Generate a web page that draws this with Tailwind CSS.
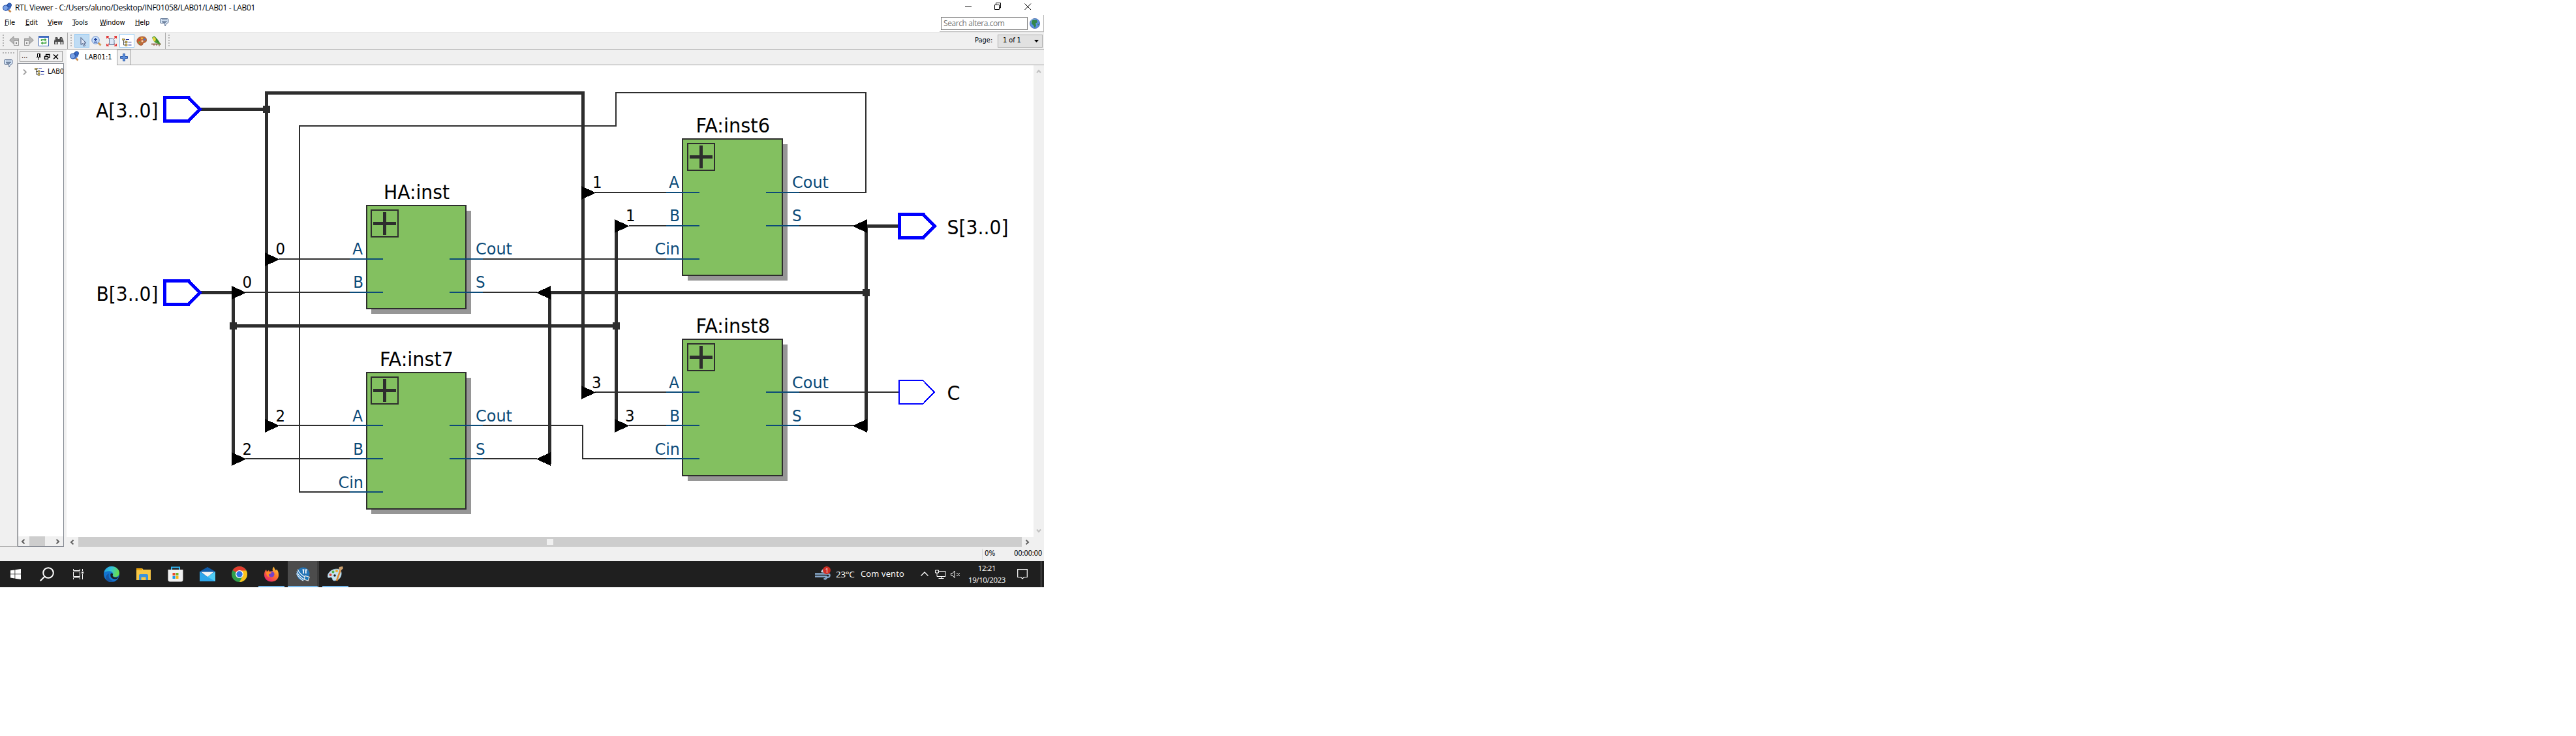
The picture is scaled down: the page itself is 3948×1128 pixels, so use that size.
<!DOCTYPE html>
<html lang="pt-BR">
<head>
<meta charset="utf-8">
<title>RTL Viewer</title>
<script src="https://cdn.jsdelivr.net/npm/@tailwindcss/browser@4"></script>
</head>
<body class="bg-white">
<svg class="hidden">
  <defs>
    <symbol id="bubble" viewBox="0 0 14 14"><path d="M1.5 1.5h9.5q2 0 2 1.5v3.5q0 2-2 2h-.5l-2.5 4.500l-.5-4.500h-5.500q-1.500 0-1.500-1.500v-4q0-1.500 1-1.500z" fill="#d5e4f5" stroke="#5f7393"/><path d="M3 3.500h8M3 5.500h8M4 7.300h5" stroke="#45597d" stroke-width=".9"/></symbol>
    <symbol id="lens" viewBox="0 0 16 16"><path d="M10 11l3.500 3.500" stroke="#c98a4b" stroke-width="2.600"/><path d="M2 7l8-6 4 1v6l-4 4-5 1z" fill="#4d7bd0"/><circle cx="5.500" cy="8" r="4" fill="#7aa2e6" stroke="#2f57a8"/><circle cx="11.500" cy="3.800" r="3" fill="#3768c5" stroke="#234a98"/></symbol>
    <symbol id="tree" viewBox="0 0 15 12"><path d="M2.500 2v8h4M2.500 5.500h4M1 1.500h4" fill="none" stroke="#555" /><path d="M0 .5h4v2h-4zM5 4h3v3h-3zM5 8.500h3v3h-3z" fill="#d8b84a" stroke="#5c5c44" stroke-width=".6"/><path d="M6 1.500h5M9.500 5.500h5M9.500 10h5" stroke="#1c2f9c" stroke-width="1.200"/></symbol>
    <symbol id="larr" viewBox="0 0 7 8"><path d="M5.500 .7L2 4l3.500 3.300" fill="none" stroke="#606060" stroke-width="2"/></symbol>
    <symbol id="rarr" viewBox="0 0 7 8"><path d="M1.500 .7L5 4l-3.500 3.300" fill="none" stroke="#606060" stroke-width="2"/></symbol>
    <symbol id="back" viewBox="0 0 16 15"><path d="M.5 6.500L7 .7v3.300h7.500v5h-7.500v3.300z" fill="#b5b5b5" stroke="#999"/><rect x="7.500" y="7.500" width="7" height="7" fill="#eee" stroke="#999"/><rect x="10" y="10" width="2" height="2" fill="#777"/></symbol>
  </defs>
</svg>
<div class="flex h-[900px] w-[1600px] flex-col overflow-hidden bg-[#f0f0f0] font-['DejaVu_Sans_Condensed','DejaVu_Sans',sans-serif] text-[11px] text-black">

  <!-- title bar and menu -->
  <header class="flex h-[49px] justify-between bg-white">
    <div>
      <div class="flex h-[23px] items-center pl-[3px] pt-px">
        <svg class="size-4"><use href="#lens"/></svg>
        <h1 class="ml-1 whitespace-nowrap font-['Open_Sans',sans-serif] text-[12px] tracking-[-0.3px]">RTL Viewer - C:/Users/aluno/Desktop/INF01058/LAB01/LAB01 - LAB01</h1>
      </div>
      <nav class="flex h-6 items-center pt-px pl-[7px] text-[11px] tracking-[-0.1px]">
        <span class="w-8"><u>F</u>ile</span><span class="w-[34px]"><u>E</u>dit</span><span class="w-[38px]"><u>V</u>iew</span><span class="w-[42px]"><u>T</u>ools</span><span class="w-[54px]"><u>W</u>indow</span><span class="w-[38px]"><u>H</u>elp</span>
        <svg class="mb-1 size-[14px]"><use href="#bubble"/></svg>
      </nav>
    </div>
    <div class="flex flex-col items-end">
      <svg class="h-[23px] w-[130px]" fill="none" stroke="#000"><path d="M9 10.500h10M54.500 7.500h7v7h-7zM56.500 7v-2.500h7v7.500h-2M100.500 5.500l9.500 9.500M110 5.500l-9.500 9.500"/></svg>
      <div class="flex h-[26px] w-[160px] items-center border-r border-b border-[#b8b8b8] pl-[2px]">
        <div class="flex h-5 w-[133px] items-center border border-[#7a7a7a] pl-[3px] font-['Open_Sans',sans-serif] text-[12px] tracking-[-0.42px] text-[#757575]">Search altera.com</div>
        <svg class="ml-[3px] size-4" viewBox="0 0 16 16"><circle cx="8" cy="8" r="7.600" fill="#5b8fe0" stroke="#3b5fa8" stroke-width=".8"/><circle cx="6" cy="5" r="4" fill="#a8c8f5" opacity=".6"/><path d="M3 4l3-2 5 1 1 3-3 2 1 3-2 4-2-4-3-3zM12 8l2 1-1 3z" fill="#33864a"/></svg>
      </div>
    </div>
  </header>

  <!-- toolbar -->
  <div class="flex h-[27px] items-center border-t border-b border-t-[#e6e6e6] border-b-[#b0b0b0]">
    <div class="ml-1 h-[19px] w-[2px] bg-[repeating-linear-gradient(#b4b4b4_0_2px,#f0f0f0_2px_4px)]"></div>
    <svg class="ml-2 h-[15px] w-4"><use href="#back"/></svg>
    <svg class="ml-[6px] h-[15px] w-4 -scale-x-100"><use href="#back"/></svg>
    <svg class="ml-[7px] size-4" viewBox="0 0 16 16"><rect x=".5" y=".5" width="15" height="15" fill="#fff" stroke="#3b63b0"/><path d="M1 1h14v2h-14z" fill="#4a78cc"/><path d="M4.500 8v-2h6M11.500 8.500v2.500h-6" fill="none" stroke="#3aa23a" stroke-width="1.500"/><path d="M9.500 3.500l3 2.500-3 2.500zM6.500 8.500l-3 2.500 3 2.500z" fill="#3aa23a"/></svg>
    <svg class="ml-[7px] size-4" viewBox="0 0 16 16"><path d="M3 2h3l1 3h2l1-3h3l2.500 6v5h-5.500v-4h-3v4h-6v-5z" fill="#4b4b4b"/><path d="M2.500 9.500h3v2.500h-3zM11 9.500h3v2.500h-3zM4 3.500l-1 3M12 3.500l1 3" fill="#bbb" stroke="#ccc" stroke-width=".7"/></svg>
    <div class="ml-[5px] h-[25px] w-px bg-[#a8a8a8]"></div>
    <div class="ml-1 h-[19px] w-[2px] bg-[repeating-linear-gradient(#b4b4b4_0_2px,#f0f0f0_2px_4px)]"></div>
    <div class="ml-1 flex h-[21px] w-[23px] items-center justify-center border border-[#99cbf3] bg-[#bfdcf4]"><svg class="mt-1 ml-1 h-[15px] w-3" viewBox="0 0 12 15"><path d="M2 .5v11l2.500-2 2 4.500 2-1-2-4h3.500z" fill="#dfe8f7" stroke="#46577c"/></svg></div>
    <svg class="ml-[3px] size-4" viewBox="0 0 16 16"><path d="M10.500 10.500l4 4" stroke="#d2a05a" stroke-width="2.800"/><circle cx="6.500" cy="6.500" r="5.700" fill="#c9dffa" stroke="#5f86c8"/><path d="M4 5.500h5M6.500 3v5M4 9.500h5" stroke="#24469a" stroke-width="1.300"/></svg>
    <svg class="ml-[7px] size-4" viewBox="0 0 16 16"><path d="M.5 4V.500H4M12 .5h3.500V4M15.500 12v3.500H12M4 15.500H.5V12M1 1l3 3M15 1l-3 3M15 15l-3-3M1 15l3-3" fill="none" stroke="#e23333" stroke-width="1.300"/><path d="M4.500 3.500h5l2.500 2.500v7.500h-7.500z" fill="#dde8f8" stroke="#687c9c"/></svg>
    <div class="ml-[4px] flex h-[21px] w-[23px] items-center justify-center border border-[#99cbf3] bg-white"><svg class="mt-1 h-3 w-[15px]"><use href="#tree"/></svg></div>
    <svg class="ml-[3px] size-4" viewBox="0 0 16 16"><path d="M1 9c-1-4 3-8 8-8 4 0 7 2 6.500 6-.5 3.500-3.500 3-5 4-1 1.500 0 3-3 3.500-3 0-5.500-2-6.500-5.500z" fill="#c2693a" stroke="#93471f" stroke-width=".7"/><circle cx="4.500" cy="6" r="1.500" fill="#eb3a2c"/><circle cx="8.500" cy="3.800" r="1.500" fill="#f3c33a"/><circle cx="12.300" cy="5.500" r="1.500" fill="#3d78d8"/><circle cx="5" cy="10" r="1.500" fill="#5fb04e"/><circle cx="9" cy="8" r="1.500" fill="#f5d7b8"/></svg>
    <svg class="ml-[7px] size-4" viewBox="0 0 16 16"><path d="M0 12.500h15" stroke="#7a4320" stroke-width="1.500"/><path d="M1 3q1-3 4-2.500l3 3 4 5 2 5-5-2q-5-1-6-5z" fill="#4c9b35"/><path d="M2 3q2-2 4 0l1 3-2 3-2-2z" fill="#ecd63c"/><path d="M7 5l4 5" stroke="#276a24"/><path d="M4 12v3M8 12v3M12 13v3" stroke="#7a4320"/></svg>
    <div class="ml-[5px] h-[25px] w-px bg-[#a8a8a8]"></div>
    <div class="ml-1 h-[19px] w-[2px] bg-[repeating-linear-gradient(#b4b4b4_0_2px,#f0f0f0_2px_4px)]"></div>
    <span class="ml-auto w-[35px] tracking-[0px]">Page:</span>
    <div class="mr-[2px] flex h-5 w-[69px] items-center justify-between border border-[#adadad] bg-[#e1e1e1] pr-[5px] pl-[7px] tracking-[-0.1px]">1 of 1<svg class="h-1 w-[7px]"><path d="M0 0h7L3.500 4z"/></svg></div>
  </div>

  <!-- work area -->
  <main class="flex h-[762px]">
    <aside class="flex w-[27px] flex-col items-center border-r border-b border-[#b0b0b0]">
      <div class="mt-1 h-[2px] w-[19px] bg-[repeating-linear-gradient(90deg,#b4b4b4_0_2px,#f0f0f0_2px_4px)]"></div>
      <svg class="mt-2 size-[14px]"><use href="#bubble"/></svg>
    </aside>
    <section class="flex w-[71px] flex-col">
      <div class="mt-[2px] ml-[3px] flex h-[17px] w-[66px] items-center border border-[#a0a0a0] pl-[2px]"><span class="w-[22px] tracking-[0px]">...</span>
        <svg class="h-3 w-9" fill="none" stroke="#000"><path d="M2.500 1v5.500M6.500 1v5.500M2 1.500h5M.5 6.500h7M4.500 7v4M5.500 2v4"/><path d="M13.500 5.500h5v4h-5zM15.500 5v-2.500h5.500v4.500h-2.500M13 5.500h6M15 2.500h6" stroke-width="1.300"/><path d="M27 2.500l7 7M34 2.500l-7 7" stroke-width="1.500"/></svg></div>
      <div class="mt-[2px] flex h-[741px] flex-col justify-between border border-[#828790] bg-white">
        <div class="flex items-center pt-[4px] pl-[7px]"><svg class="h-[9px] w-[6px]" fill="none" stroke="#a0a0a0" stroke-width="1.800"><path d="M1 .5L5 4.500 1 8.500"/></svg><svg class="ml-3 h-3 w-[15px]"><use href="#tree"/></svg><span class="ml-[5px] w-6 overflow-hidden tracking-[-0.2px]">LAB0</span></div>
        <div class="flex h-[15px] items-center bg-[#f0f0f0] pl-1"><svg class="h-2 w-[7px]"><use href="#larr"/></svg><div class="ml-[6px] h-[15px] w-6 bg-[#cdcdcd]"></div><svg class="ml-4 h-2 w-[7px]"><use href="#rarr"/></svg></div>
      </div>
    </section>
    <section class="ml-1 flex w-[1498px] flex-col">
      <div class="flex h-6 border-b border-[#a0a0a0]">
        <div class="-mb-px flex h-6 w-[78px] items-center border-r border-[#a0a0a0] bg-white pl-[4px]"><svg class="-mt-1 size-4"><use href="#lens"/></svg><span class="ml-2 tracking-[0px]">LAB01:1</span></div>
        <div class="flex w-[21px] items-center justify-center border-t border-r border-[#a0a0a0]"><svg class="size-3"><path d="M4.500 .5h3v4h4v3h-4v4h-3v-4h-4v-3h4z" fill="#5d90dd" stroke="#2d58a6"/></svg></div>
      </div>
      <div class="flex h-[723px]">
        <svg class="h-[723px] w-[1482px] bg-white font-['DejaVu_Sans_Condensed','DejaVu_Sans',sans-serif]" viewBox="102 100 1482 723" shape-rendering="crispEdges">
          <defs>
            <g id="expand"><rect x="8" y="8" width="41" height="41" fill="none" stroke="#2d2d2d" stroke-width="2"/><path d="M11 28.500h35M28.500 11v35" stroke="#2d2d2d" stroke-width="5"/></g>
            <g id="r"><path d="M0-10.500v21l22-10.500z"/></g>
            <g id="l"><path d="M0-10.500v21l-22-10.500z"/></g>
            <path id="pin" d="M2.500-18h36.500l17.500 18-17.500 18h-36.500z" fill="none" stroke="#00f"/>
            <path id="port" d="M0 0h51" stroke="#0b4a78" stroke-width="2"/>
          </defs>
          <g fill="#969696"><path d="M569 323h153v158h-153zM569 579h153v209h-153zM1054 221h153v209h-153zM1054 528h153v209h-153z"/></g>
          <g fill="#83c060" stroke="#2d2d2d" stroke-width="2"><path d="M562 315h152v158h-152zM562 571h152v209h-152zM1046 213h153v209h-153zM1046 520h153v209h-153z"/></g>
          <use href="#expand" x="561" y="314"/><use href="#expand" x="561" y="570"/><use href="#expand" x="1046" y="212"/><use href="#expand" x="1046" y="519"/>
          <g fill="none" stroke="#2d2d2d" stroke-width="2">
            <path d="M427 397h110M376 448h161M427 652h110M376 703h161M537 754h-78V193h485v-51h383v153h-102"/>
            <path d="M740 397h282M740 448h83M740 652h153v51h129M740 703h83"/>
            <path d="M912 295h110M964 346h58M1225 346h84M912 601h110M964 652h58M1225 601h152M1225 652h84"/>
          </g>
          <g fill="none" stroke="#2d2d2d" stroke-width="5">
            <path d="M306 167.500h103M408.500 652V142.500h485V601M306 448.500h51.500V703M357.500 499.500h587M944.500 346v306M842.500 711V448.500h485M1327.500 660V346.500H1377"/>
          </g>
          <g fill="#2d2d2d"><path d="M403 162h11v11h-11zM352 494h11v11h-11zM939 494h11v11h-11zM1322 443h11v11h-11z"/></g>
          <use href="#r" x="406" y="397.500"/><use href="#r" x="355" y="448.500"/><use href="#r" x="406" y="652.500"/><use href="#r" x="355" y="703.500"/>
          <use href="#r" x="891" y="295.500"/><use href="#r" x="942" y="346.500"/><use href="#r" x="891" y="601.500"/><use href="#r" x="942" y="652.500"/>
          <use href="#l" x="844" y="448.500"/><use href="#l" x="844" y="703.500"/><use href="#l" x="1329" y="346.500"/><use href="#l" x="1329" y="652.500"/>
          <use href="#port" x="536" y="397"/><use href="#port" x="536" y="448"/><use href="#port" x="689" y="397"/><use href="#port" x="689" y="448"/>
          <use href="#port" x="536" y="652"/><use href="#port" x="536" y="703"/><use href="#port" x="536" y="754"/><use href="#port" x="689" y="652"/><use href="#port" x="689" y="703"/>
          <use href="#port" x="1021" y="295"/><use href="#port" x="1021" y="346"/><use href="#port" x="1021" y="397"/><use href="#port" x="1174" y="295"/><use href="#port" x="1174" y="346"/>
          <use href="#port" x="1021" y="601"/><use href="#port" x="1021" y="652"/><use href="#port" x="1021" y="703"/><use href="#port" x="1174" y="601"/><use href="#port" x="1174" y="652"/>
          <use href="#pin" x="250" y="167.500" stroke-width="5"/><use href="#pin" x="250" y="448.500" stroke-width="5"/><use href="#pin" x="1376" y="346.500" stroke-width="5"/><use href="#pin" x="1375.500" y="601" stroke-width="2"/>
          <g font-size="31">
            <text x="147" y="180" textLength="95.500" lengthAdjust="spacingAndGlyphs">A[3..0]</text>
            <text x="147.500" y="461" textLength="95" lengthAdjust="spacingAndGlyphs">B[3..0]</text>
            <text x="1451.500" y="358.500" textLength="94" lengthAdjust="spacingAndGlyphs">S[3..0]</text>
            <text x="1451.500" y="613" textLength="20" lengthAdjust="spacingAndGlyphs">C</text>
            <text x="588" y="305" textLength="101" lengthAdjust="spacingAndGlyphs">HA:inst</text>
            <text x="582" y="561" textLength="113" lengthAdjust="spacingAndGlyphs">FA:inst7</text>
            <text x="1066.500" y="203" textLength="113.500" lengthAdjust="spacingAndGlyphs">FA:inst6</text>
            <text x="1066.500" y="510" textLength="113.500" lengthAdjust="spacingAndGlyphs">FA:inst8</text>
          </g>
          <g font-size="25.500">
            <text x="422.500" y="389.500">0</text><text x="371.500" y="440.500">0</text><text x="422.500" y="645.500">2</text><text x="371.500" y="696.500">2</text>
            <text x="908" y="288">1</text><text x="959" y="339">1</text><text x="907" y="594.500">3</text><text x="958" y="645.500">3</text>
          </g>
          <g font-size="25.500" fill="#0b4a78">
            <g text-anchor="end">
              <text x="556" y="389.500">A</text><text x="557" y="440.500">B</text><text x="556" y="645.500">A</text><text x="557" y="696.500">B</text>
              <text x="1041" y="288">A</text><text x="1042" y="339">B</text><text x="1041" y="594.500">A</text><text x="1042" y="645.500">B</text>
            </g>
            <text x="518.500" y="747.500" textLength="38.500" lengthAdjust="spacingAndGlyphs">Cin</text><text x="1003.500" y="389.500" textLength="38.500" lengthAdjust="spacingAndGlyphs">Cin</text><text x="1003.500" y="696.500" textLength="38.500" lengthAdjust="spacingAndGlyphs">Cin</text>
            <text x="729" y="389.500" textLength="56" lengthAdjust="spacingAndGlyphs">Cout</text><text x="729" y="440.500">S</text><text x="729" y="645.500" textLength="56" lengthAdjust="spacingAndGlyphs">Cout</text><text x="729" y="696.500">S</text>
            <text x="1214" y="288" textLength="56" lengthAdjust="spacingAndGlyphs">Cout</text><text x="1214" y="339">S</text><text x="1214" y="594.500" textLength="56" lengthAdjust="spacingAndGlyphs">Cout</text><text x="1214" y="645.500">S</text>
          </g>
        </svg>
        <div class="flex w-4 flex-col items-center justify-between pt-[6px] pb-[6px]">
          <svg class="h-[7px] w-2" fill="none" stroke="#c0c0c0" stroke-width="2"><path d="M1 5.500L4 2l3 3.500"/></svg>
          <svg class="h-[7px] w-2" fill="none" stroke="#c0c0c0" stroke-width="2"><path d="M1 1.500L4 5l3-3.500"/></svg>
        </div>
      </div>
      <div class="flex h-[15px] items-center pl-[5px]"><svg class="h-2 w-[7px]"><use href="#larr"/></svg><div class="ml-[6px] flex h-[15px] w-[1446px] items-center bg-[#cdcdcd] pl-[718px]"><div class="h-[9px] w-[10px] bg-[#f0f0f0]"></div></div><svg class="ml-[5px] h-2 w-[7px]"><use href="#rarr"/></svg></div>
    </section>
  </main>

  <!-- status bar -->
  <footer class="flex h-[22px] items-center justify-end">
    <div class="h-[17px] w-px bg-[#d4d4d4]"></div><span class="ml-[3px] w-[45px] text-[11.5px] tracking-[-0.1px]">0%</span><span class="w-[46px] text-[11.5px] tracking-[-0.45px]">00:00:00</span>
  </footer>

  <!-- taskbar -->
  <div class="flex h-10 justify-between bg-[#1f1f1f] font-['Open_Sans',sans-serif] text-white">
    <div class="flex">
      <div class="flex w-12 items-center justify-center"><svg class="size-4" fill="#fff"><path d="M0 2.300L6.500 1.400v6.100H0zM7.300 1.300L16 0v7.500H7.300zM0 8.300h6.500v6.200L0 13.600zM7.300 8.300H16V16l-8.700-1.300z"/></svg></div>
      <div class="flex w-12 items-center justify-center"><svg class="size-[22px]" fill="none" stroke="#fff" stroke-width="2"><circle cx="13" cy="9" r="7.800"/><path d="M7.500 14.500L.7 21.300"/></svg></div>
      <div class="flex w-12 items-center justify-center"><svg class="size-4" fill="none" stroke="#fff"><path d="M.5 0v2.500h10V0M.5 4.500h10v7H.5zM.5 16v-2.500h10V16M14.500 0v3M14.500 8v8"/><path d="M13 4h3v3h-3z" fill="#fff" stroke="none"/></svg></div>
      <div class="ml-[3px] flex w-12 items-center justify-center"><svg class="size-6" viewBox="0 0 24 24"><defs><linearGradient id="e1" x2="1" y2=".3"><stop stop-color="#1f9be4"/><stop offset=".5" stop-color="#35c3d8"/><stop offset="1" stop-color="#63dc55"/></linearGradient></defs><circle cx="12" cy="12" r="12" fill="#1275d0"/><path d="M.3 10C2 3 7 0 12 0c7 0 12 5 12 10 0 4-3 6-6 6-3.500 0-5-1.500-4-3 1-2-.5-5-4-5.500C6 7 2 8 .3 10z" fill="url(#e1)"/><path d="M8 11c-2 6 3 11.500 8 11.500-3 2-7 2-10 0-4-3-4-9 2-11.500z" fill="#1556a4"/><path d="M14 13c-1.500 2 1 4 4.500 4 2.500 0 4-1 5-2-1.500 3-4 5-7 4.500-5-.5-7-4-6-8 1-2 4-1 3.500 1.500z" fill="#1f1f1f"/></svg></div>
      <div class="ml-px flex w-12 items-center justify-center"><svg class="h-[18px] w-[22px]"><path d="M0 0h9l1.500 2H22v16H0z" fill="#f9c846"/><path d="M0 0h9v3H0z" fill="#e8a20c"/><path d="M4 18V11q0-2 2-2h10q2 0 2 2v7h-3.500v-4.500h-7V18z" fill="#3c93dc"/></svg></div>
      <div class="ml-px flex w-12 items-center justify-center"><svg class="size-6" viewBox="0 0 24 24"><path d="M6 6V1.500h12V6" fill="none" stroke="#33b6f2" stroke-width="2"/><path d="M.5 5h23v15q0 3.500-3 3.500h-17q-3 0-3-3.500z" fill="#f1f1f1"/><path d="M7.500 10h4v4h-4z" fill="#e94b2c"/><path d="M12.500 10h4v4h-4z" fill="#74b62a"/><path d="M7.500 15h4v4h-4z" fill="#1b9bea"/><path d="M12.500 15h4v4h-4z" fill="#fbb916"/></svg></div>
      <div class="ml-px flex w-12 items-center justify-center"><svg class="size-6" viewBox="0 0 24 24"><path d="M0 8l12-7 12 7v15H0z" fill="#0f5ba8"/><path d="M0 8v15h24V8L12 16z" fill="#2ea6ea"/><path d="M24 8v15L12 16z" fill="#50ccf5"/><path d="M2 8.500h20L12 16z" fill="#f5f5f5"/></svg></div>
      <div class="ml-px flex w-12 items-center justify-center"><svg class="size-6" viewBox="0 0 24 24"><circle cx="12" cy="12" r="12" fill="#2f9e4c"/><path d="M12 12L1.600 6A12 12 0 0 1 22.400 6z" fill="#e23c2e"/><path d="M12 6.500h10.600A12 12 0 0 1 12 24l5-9z" fill="#fbc21c"/><circle cx="12" cy="12" r="6" fill="#fff"/><circle cx="12" cy="12" r="4.700" fill="#2f74e6"/></svg></div>
      <div class="ml-[5px] flex w-10 items-center justify-center border-b-2 border-[#76b9ed] pt-[2px]"><svg class="size-6" viewBox="0 0 24 24"><defs><linearGradient id="ff" x1="1" x2=".3" y2="1"><stop stop-color="#ffe142"/><stop offset=".5" stop-color="#ff7a2a"/><stop offset="1" stop-color="#e8276c"/></linearGradient></defs><path d="M1 13c0-4 1-6 3-8l1 3 3-2 1 2 5-1c-1-3 0-5 2-6.500 0 3 2 4 3 6l1-2c3 3 3 7 3 9 0 6-5 10-11 10S1 19 1 13z" fill="url(#ff)"/><circle cx="12" cy="12" r="4.500" fill="#7542c9"/><path d="M4 9q4-2 8 0 0 2-4 3-1 3 2 4-6 1-6-7z" fill="#ff8b27"/></svg></div>
      <div class="ml-[5px] flex w-12 items-center justify-center border-r-[3px] border-b-2 border-r-[#3c3c3c] border-b-[#76b9ed] bg-[#4c4c4c] pt-[2px] pl-px"><svg class="size-[23px]" viewBox="0 0 24 24"><circle cx="12" cy="11" r="10.500" fill="#2474b6"/><path d="M12.500 4.500v6M16.500 4.500v6M11 4.500h3M15.500 4.500h3" fill="none" stroke="#fff" stroke-width="1.800"/><path d="M2 7q3 8 12 13M1.500 10.500q4 8 11 11.500M3.500 4q3 8 12 12" fill="none" stroke="#e8f2fa" stroke-width="1.300"/><path d="M15 14l7 2-2 6-6-2z" fill="#1876b8" stroke="#e4e4e4" stroke-width="1.300"/></svg></div>
      <div class="ml-[5px] flex w-10 items-center justify-center border-b-2 border-[#76b9ed] pt-[2px]"><svg class="size-6" viewBox="0 0 24 24"><path d="M0 16C0 9 7 4 14 4c5 0 8 3 7 9-1 6-6 9-11 9-3 0-2-4-4-5s-4 2-6-1z" fill="#c4e2f2" stroke="#8fb6cf" stroke-width=".7"/><circle cx="4.500" cy="13" r="2" fill="#de4436"/><circle cx="8.500" cy="8.500" r="2" fill="#58b24a"/><circle cx="14" cy="7" r="2" fill="#f0aa2c"/><circle cx="11" cy="14" r="1.800" fill="#1f1f1f"/><path d="M20 5l-6 17" stroke="#e08a30" stroke-width="2.500"/><path d="M18 1l5-1 1 3-4 4-3-2z" fill="#cda06d"/></svg></div>
    </div>
    <div class="flex items-center">
      <svg class="mt-[-3px] h-[22px] w-6" viewBox="0 0 24 22"><path d="M9 9q2-6 7-5 5 3 5 7z" fill="#c9dcec"/><path d="M0 11.500h20q3 0 2.500 3t-4 2q-2 5-5 2M0 15.500h17v4" fill="none" stroke="#88a9cc" stroke-width="2.400"/><circle cx="18" cy="6" r="6" fill="#cf3026"/><text x="15.700" y="9.500" fill="#fff" font-size="9">1</text></svg>
      <span class="ml-2 w-[38px] whitespace-nowrap text-[13.5px] tracking-[-0.3px]">23°C</span>
      <span class="w-[92px] whitespace-nowrap text-[13px] tracking-[0.15px]">Com vento</span>
      <svg class="h-[14px] w-[62px]" fill="none" stroke="#fff"><path d="M.5 9.500L6 4l5.500 5.500" stroke-width="1.300"/><path d="M22.500 1h5v4h-5zM25 5v5.500h13V2.500H28M31.500 11v2.500M27.500 13.500h8"/><path d="M46.500 5.500h2.500l3-3.500v10.500l-3-3.500h-2.500zM55 5l5 5M60 5l-5 5"/></svg>
      <div class="ml-[7px] flex w-[65px] flex-col items-center text-[11.5px] leading-[18px] tracking-[-0.4px]"><span>12:21</span><span>19/10/2023</span></div>
      <svg class="ml-[14px] h-4 w-4" fill="none" stroke="#fff" stroke-width="1.200"><path d="M.7.700h14.600v11.800h-4.800L8 15l-2.500-2.500H.7z"/></svg>
      <div class="mr-1 ml-5 h-10 w-px bg-[#787878]"></div>
    </div>
  </div>
</div>
</body>
</html>
